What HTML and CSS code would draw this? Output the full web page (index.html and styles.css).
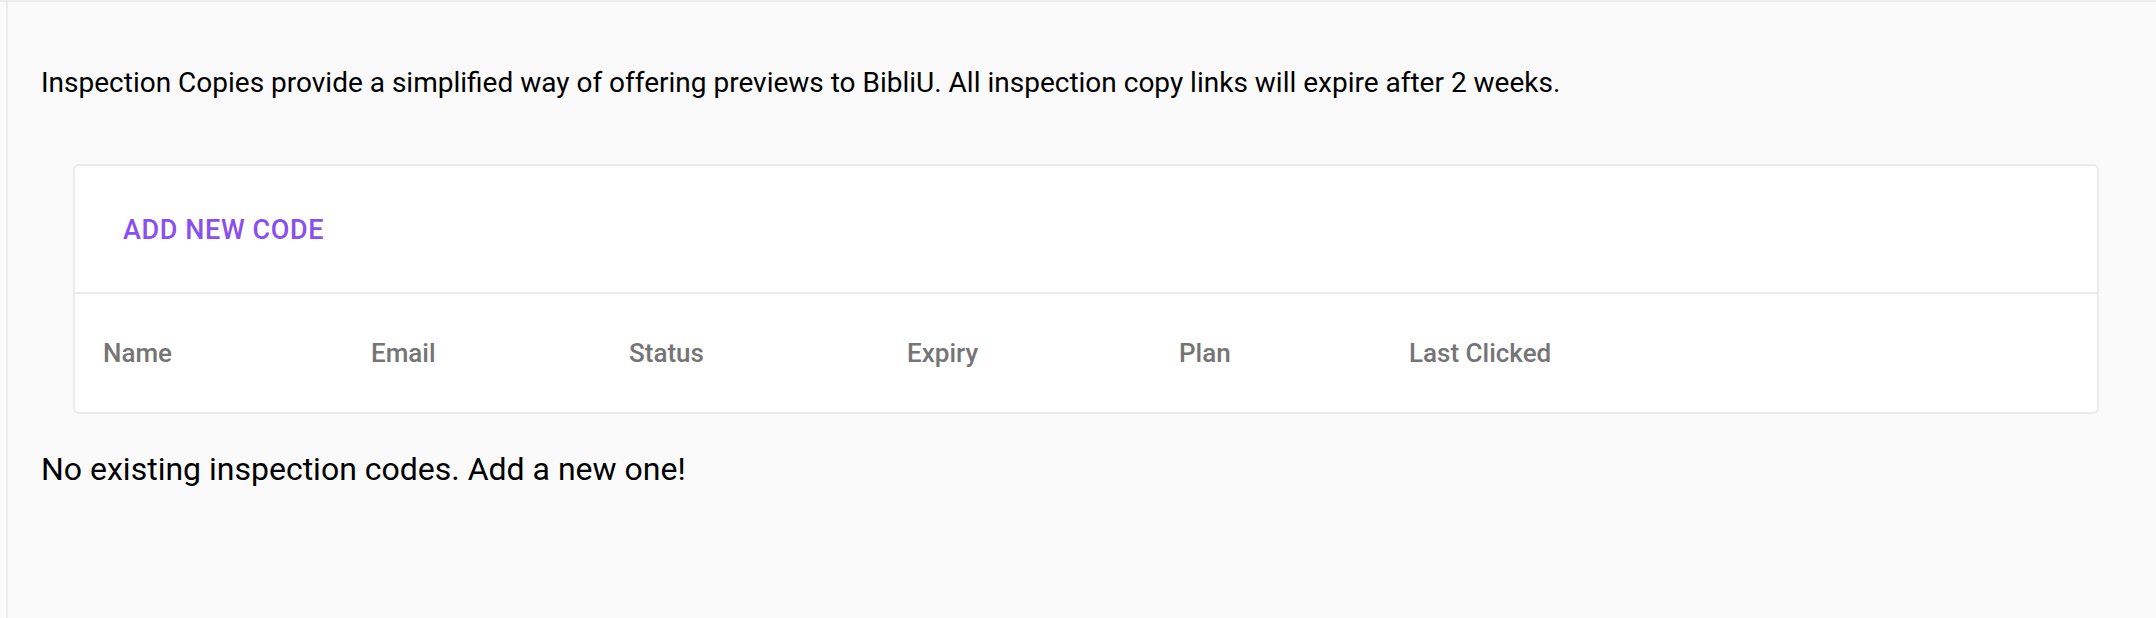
FILE: index.html
```html
<!DOCTYPE html>
<html lang="en">
<head>
<meta charset="utf-8">
<title>Inspection Copies</title>
<link rel="stylesheet" href="styles.css">
</head>
<body>
<div class="app">
  <aside class="sidebar"></aside>
  <main class="content">
    <p class="intro">Inspection Copies provide a simplified way of offering previews to BibliU. All inspection copy links will expire after 2 weeks.</p>
    <section class="card">
      <div class="card-top">
        <button class="add-btn" type="button">Add new code</button>
      </div>
      <div class="table-head">
        <div class="th">Name</div>
        <div class="th">Email</div>
        <div class="th">Status</div>
        <div class="th">Expiry</div>
        <div class="th">Plan</div>
        <div class="th">Last Clicked</div>
      </div>
    </section>
    <p class="empty">No existing inspection codes. Add a new one!</p>
  </main>
</div>
</body>
</html>
```

FILE: styles.css
```css
html, body {
  margin: 0;
  padding: 0;
  background: #fafafa;
}

body {
  font-family: Roboto, "Noto Sans", "Liberation Sans", sans-serif;
  color: #000;
}

.app {
  display: flex;
  min-height: 618px;
  border-top: 2px solid #ececec;
  box-sizing: border-box;
}

.sidebar {
  width: 6px;
  flex: 0 0 6px;
  border-right: 2px solid #ececec;
}

.content {
  flex: 1;
  padding: 0 0 0 33px;
}

.intro {
  margin: 64px 0 0 0;
  font-size: 28px;
  line-height: 33px;
  font-weight: 400;
}

.card {
  margin: 65px 57px 0 32px;
  background: #fff;
  border: 2px solid #ebebeb;
  border-radius: 6px;
}

.card-top {
  height: 126px;
  display: flex;
  align-items: center;
  padding-left: 36px;
  border-bottom: 2px solid #ebebeb;
}

.add-btn {
  background: none;
  border: none;
  padding: 8px 12px;
  font-family: Roboto, "Noto Sans", "Liberation Sans", sans-serif;
  font-weight: 500;
  font-size: 27px;
  letter-spacing: 0.6px;
  text-transform: uppercase;
  color: #8a4ff0;
  cursor: pointer;
  margin-top: 1px;
}

.table-head {
  height: 118px;
  display: grid;
  grid-template-columns: 268px 258px 278px 272px 230px 1fr;
  align-items: center;
  padding-left: 28px;
}

.th {
  font-size: 26px;
  font-weight: 500;
  color: #757575;
}

.empty {
  margin: 37px 0 0 0;
  font-size: 32px;
  line-height: 37px;
}
```
